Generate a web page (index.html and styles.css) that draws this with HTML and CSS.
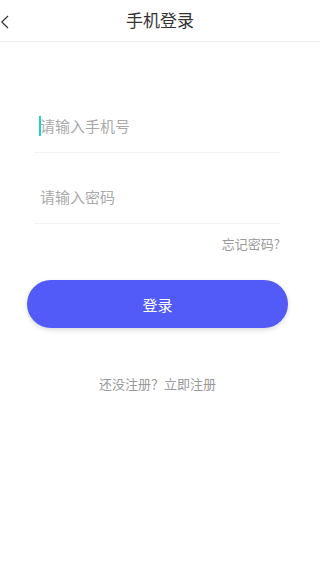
FILE: index.html
```html
<!DOCTYPE html>
<html lang="zh-CN">
<head>
<meta charset="utf-8">
<meta name="viewport" content="width=device-width, initial-scale=1">
<title>手机登录</title>
<link rel="stylesheet" href="styles.css">
</head>
<body>
<header class="topbar">
  <span class="back">
    <svg width="10" height="14" viewBox="0 0 10 14"><polyline points="8,1 1.8,7 8,13" fill="none" stroke="#333" stroke-width="1.2"/></svg>
  </span>
  <h1 class="title">手机登录</h1>
</header>
<main class="form">
  <div class="field">
    <span class="caret"></span>
    <input class="input" type="tel" placeholder="请输入手机号">
  </div>
  <div class="field">
    <input class="input" type="password" placeholder="请输入密码">
  </div>
  <div class="forgot">忘记密码?</div>
  <button class="submit" type="button">登录</button>
  <p class="register">还没注册？立即注册</p>
</main>
</body>
</html>
```
FILE: styles.css
```css
* { box-sizing: border-box; }
html, body {
  margin: 0;
  padding: 0;
  background: #fff;
  font-family: "Noto Sans CJK SC", "Noto Sans", sans-serif;
}
.topbar {
  height: 42px;
  border-bottom: 1px solid #f1f1f1;
  display: flex;
  align-items: center;
  justify-content: center;
  position: relative;
}
.back {
  position: absolute;
  left: 0;
  top: 15px;
  width: 10px;
  height: 14px;
  display: block;
}
.back svg { display: block; }
.title {
  margin: 0;
  font-size: 17px;
  font-weight: normal;
  color: #333;
  line-height: 20px;
  margin-top: -1px;
}
.form {
  display: flex;
  flex-direction: column;
  padding: 40px 40px 0 34px;
}
.field {
  display: flex;
  align-items: center;
  padding: 34px 0 16px 0;
  border-bottom: 1px solid #f2f2f2;
}
.caret {
  width: 2px;
  height: 20px;
  background: #1fd3c4;
  margin-left: 5px;
  margin-right: -7px;
  position: relative;
  z-index: 1;
  flex: none;
}
.input {
  border: 0;
  outline: none;
  padding: 0 0 0 6px;
  margin: 0;
  height: 20px;
  line-height: 20px;
  font-size: 15px;
  font-family: inherit;
  color: #333;
  background: transparent;
  flex: 1;
  min-width: 0;
}
.input::placeholder { color: #aaa; }
.forgot {
  align-self: flex-end;
  margin-top: 11px;
  font-size: 13px;
  line-height: 18px;
  color: #999;
}
.submit {
  margin: 27px -8px 0 -7px;
  height: 48px;
  border: 0;
  border-radius: 24px;
  background: #525bf7;
  color: #fff;
  font-family: inherit;
  font-size: 15px;
  box-shadow: 0 2px 5px rgba(0,0,0,0.15);
}
.register {
  margin: 47px -8px 0 -7px;
  text-align: center;
  font-size: 13px;
  line-height: 18px;
  color: #999;
}
```
